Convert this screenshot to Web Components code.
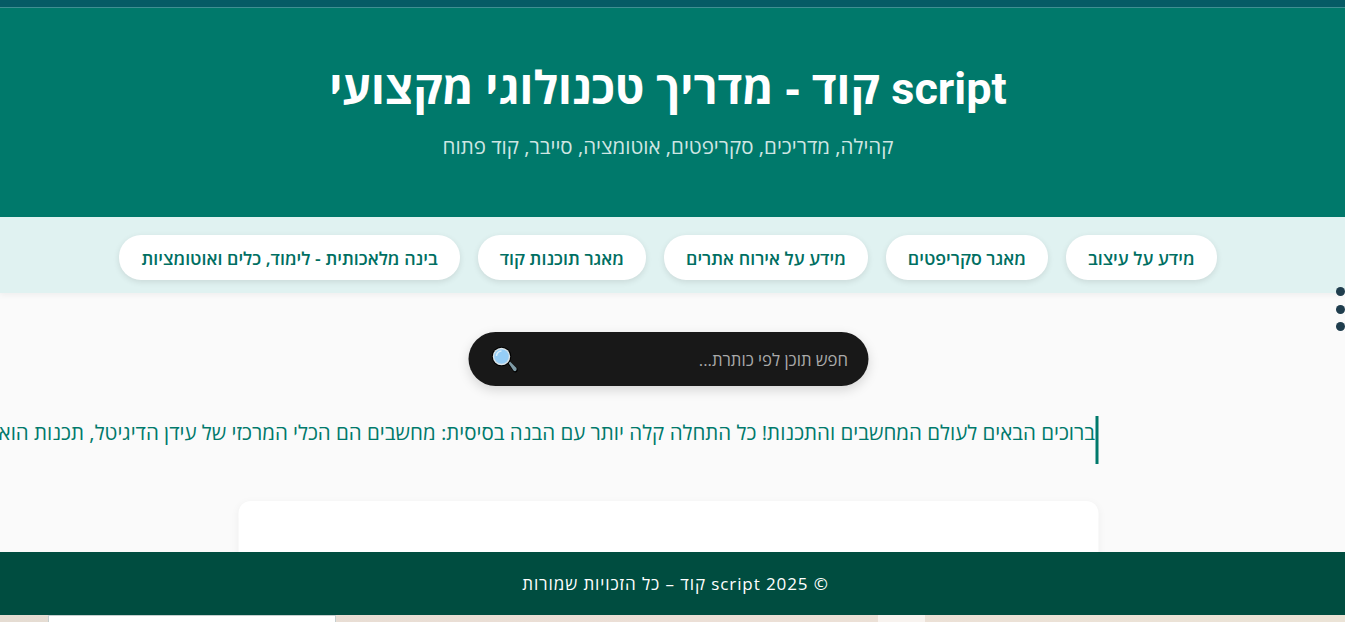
<!DOCTYPE html>
<html lang="he" dir="rtl">
<head>
<meta charset="utf-8">
<title>script קוד</title>
<style>
  html, body { margin: 0; height: 100%; overflow: hidden; background: #fafafa; }
  body { display: flex; flex-direction: column; font-family: "Open Sans", "Liberation Sans", sans-serif; }
  page-main { flex: 1; min-height: 0; }
  .lat { font-family: Roboto, sans-serif; font-size: 45px; }
</style>
</head>
<body>

<top-bar></top-bar>

<page-main>
  <site-header>
    <span slot="title"><span class="lat">script</span> קוד - מדריך טכנולוגי מקצועי</span>
    <span slot="sub">קהילה, מדריכים, סקריפטים, אוטומציה, סייבר, קוד פתוח</span>
  </site-header>
  <nav-bar>
    <nav-pill>מידע על עיצוב</nav-pill>
    <nav-pill>מאגר סקריפטים</nav-pill>
    <nav-pill>מידע על אירוח אתרים</nav-pill>
    <nav-pill>מאגר תוכנות קוד</nav-pill>
    <nav-pill>בינה מלאכותית - לימוד, כלים ואוטומציות</nav-pill>
  </nav-bar>
  <search-box placeholder="חפש תוכן לפי כותרת..."></search-box>
  <welcome-line>ברוכים הבאים לעולם המחשבים והתכנות! כל התחלה קלה יותר עם הבנה בסיסית: מחשבים הם הכלי המרכזי של עידן הדיגיטל, תכנות הוא השפה שמאפשרת לנו לדבר איתם</welcome-line>
  <content-card></content-card>
</page-main>

<site-footer>© 2025 script קוד – כל הזכויות שמורות</site-footer>
<desk-strip></desk-strip>
<side-dots></side-dots>

<script>
function shadow(el, html) {
  el.attachShadow({mode: 'open'}).innerHTML = html;
}

customElements.define('top-bar', class extends HTMLElement {
  connectedCallback() {
    shadow(this, `<style>
      :host { display: block; height: 7px; flex: none; background: #055b65; border-bottom: 1px solid #3f8f92; }
    </style>`);
  }
});

customElements.define('page-main', class extends HTMLElement {
  connectedCallback() {
    shadow(this, `<style>
      :host { display: block; overflow: hidden; }
    </style><slot></slot>`);
  }
});

customElements.define('site-header', class extends HTMLElement {
  connectedCallback() {
    shadow(this, `<style>
      :host { display: flex; flex-direction: column; align-items: center; height: 209px; box-sizing: border-box;
        padding: 48px 9px 0 0; background: #00796b; color: #fff; }
      .t { font-size: 45.400px; font-weight: 700; line-height: 60px; height: 60px; }
      .s { font-size: 20.500px; line-height: 28px; margin-top: 16px; color: #cfe6e3; }
    </style>
    <div class="t"><slot name="title"></slot></div>
    <div class="s"><slot name="sub"></slot></div>`);
  }
});

customElements.define('nav-bar', class extends HTMLElement {
  connectedCallback() {
    shadow(this, `<style>
      :host { display: flex; justify-content: center; gap: 18px; height: 76px; box-sizing: border-box;
        padding: 18px 9px 0 0; background: #e0f2f1; box-shadow: 0 2px 6px rgba(0,0,0,.05); position: relative; }
    </style><slot></slot>`);
  }
});

customElements.define('nav-pill', class extends HTMLElement {
  connectedCallback() {
    shadow(this, `<style>
      :host { display: flex; align-items: center; height: 45px; padding: 0 22px; box-sizing: border-box;
        background: #fff; border-radius: 22px; color: #006f62; font-size: 17.800px; font-weight: 600;
        white-space: nowrap; box-shadow: 0 2px 6px rgba(0,0,0,.1); }
    </style><slot></slot>`);
  }
});

customElements.define('search-box', class extends HTMLElement {
  connectedCallback() {
    shadow(this, `<style>
      :host { display: block; width: 400px; height: 54px; margin: 39px auto 0; transform: translateX(-4.500px); }
      .b { display: flex; align-items: center; height: 100%; box-sizing: border-box; padding: 0 20px 0 23px;
        background: #181818; border-radius: 27px; box-shadow: 0 4px 12px rgba(0,0,0,.15); }
      input { flex: 1; min-width: 0; background: none; border: 0; outline: 0; padding: 0; font: 16.700px "Open Sans", "Liberation Sans", sans-serif; color: #eee; direction: rtl; }
      input::placeholder { color: #aaa; opacity: 1; }
      svg { flex: none; display: block; }
    </style>
    <div class="b">
      <input placeholder="${this.getAttribute('placeholder')}">
      <svg width="27" height="27" viewBox="0 0 27 27">
        <path d="M15.500 16.500l2-2 8.500 8q.7 2-.5 3.200t-3.200.3z" fill="#000"/>
        <path d="M17 17l1.500-1.500 6.500 6.500q.5 1.700-.5 2.700t-2.500-.2z" fill="#7f9ba6"/>
        <circle cx="10" cy="10.500" r="9.800" fill="#000"/>
        <circle cx="10" cy="10.500" r="8.700" fill="#d9e2e6"/>
        <circle cx="10" cy="10.500" r="7.300" fill="#95cdf6"/>
        <path d="M5 10a5 5 0 0 1 5-5" fill="none" stroke="#d8eefc" stroke-width="1.500"/>
      </svg>
    </div>`);
  }
});

customElements.define('welcome-line', class extends HTMLElement {
  connectedCallback() {
    shadow(this, `<style>
      :host { display: block; width: 857px; height: 48px; margin: 30px auto 0; transform: translateX(-4.500px);
        border-right: 3px solid #00796b; color: #00796b; font-size: 20.500px; line-height: 32px; white-space: nowrap; }
    </style><slot></slot>`);
  }
});

customElements.define('content-card', class extends HTMLElement {
  connectedCallback() {
    shadow(this, `<style>
      :host { display: block; width: 860px; height: 300px; margin: 37px auto 0; transform: translateX(-4.500px);
        background: #fff; border-radius: 12px; box-shadow: 0 2px 8px rgba(0,0,0,.05); }
    </style>`);
  }
});

customElements.define('site-footer', class extends HTMLElement {
  connectedCallback() {
    shadow(this, `<style>
      :host { display: flex; flex: none; align-items: center; justify-content: center; height: 63px; box-sizing: border-box; padding-left: 6px;
        background: #004d40; color: #fff; font-size: 17px; letter-spacing: .9px; }
    </style><slot></slot>`);
  }
});

customElements.define('desk-strip', class extends HTMLElement {
  connectedCallback() {
    shadow(this, `<style>
      :host { display: flex; flex: none; direction: ltr; height: 7px; overflow: hidden;
        background: linear-gradient(90deg, #e5dcd2, #ecdfd6 50%, #ebe3d6); }
      .win { width: 288px; margin-left: 48px; height: 7px; background: #fff; border: solid #c5cfcf; border-width: 1px 1px 0; box-sizing: border-box; }
      .pane { width: 47px; margin-left: 542px; background: #f8f3ef; }
      .clock { font: 11px "Liberation Sans", sans-serif; color: #000; margin-left: 333px; padding-top: 5px; line-height: 12px; }
    </style>
    <div class="win"></div><div class="pane"></div><div class="clock">10:07:914</div>`);
  }
});

customElements.define('side-dots', class extends HTMLElement {
  connectedCallback() {
    shadow(this, `<style>
      :host { position: fixed; top: 287px; right: 0; display: flex; flex-direction: column; gap: 8.500px; }
      i { display: block; width: 9px; height: 9px; border-radius: 50%; background: #1f3d4d; }
    </style><i></i><i></i><i></i>`);
  }
});
</script>
</body>
</html>
